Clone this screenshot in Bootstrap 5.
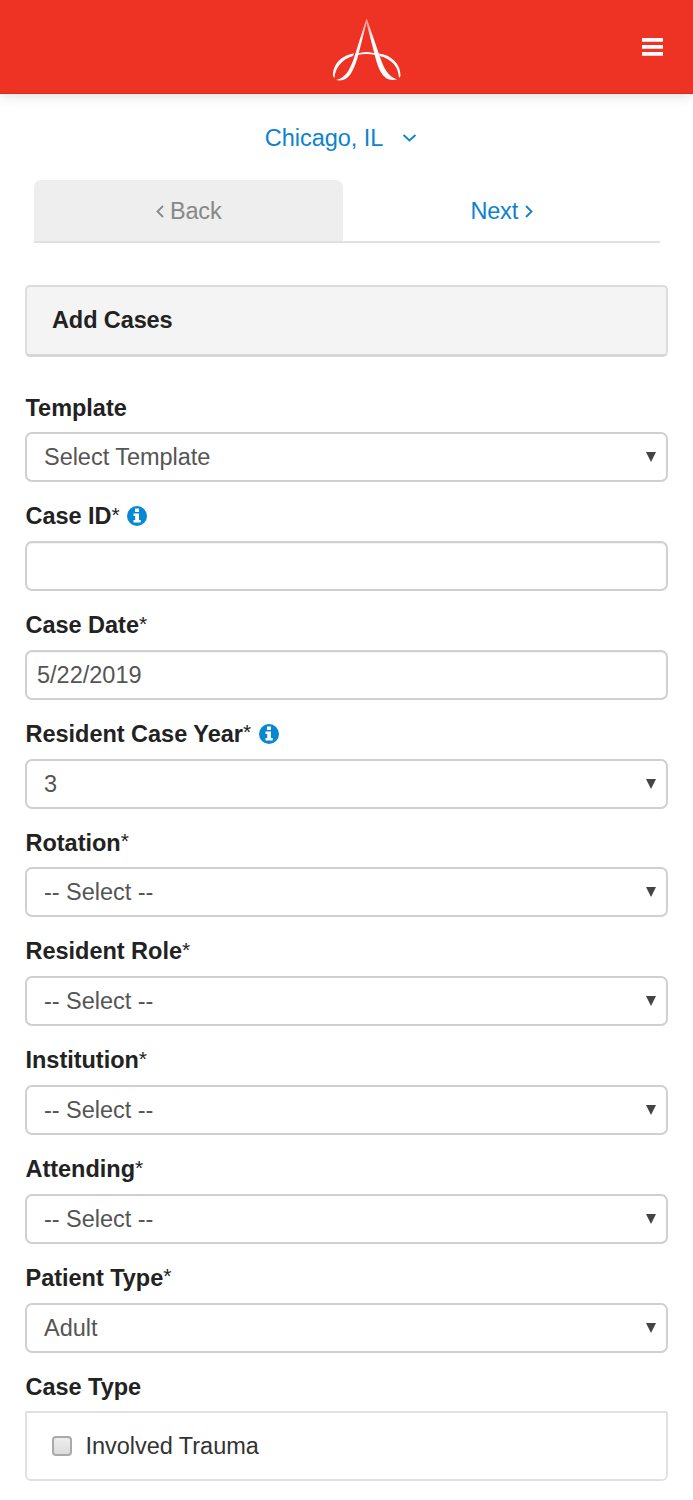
<!DOCTYPE html>
<html lang="en">
<head>
<meta charset="utf-8">
<meta name="viewport" content="width=device-width, initial-scale=1">
<title>Add Cases</title>
<link href="https://cdn.jsdelivr.net/npm/bootstrap@5.3.0/dist/css/bootstrap.min.css" rel="stylesheet">
<style>
body{font-family:"Liberation Sans",Arial,sans-serif;font-size:23.5px;line-height:36px;color:#222;background:#fff;letter-spacing:-.1px}
.topbar{height:94px;background:#ee3324;border-bottom:1px solid #d92c20;box-shadow:0 2px 12px rgba(0,0,0,.13);padding:6px 30px 0}
.topbar .menu-icon{margin-bottom:6px}
.logo{margin-left:61px}
.accent,.accent:hover{color:#0d83cd}
.place{margin-top:26px;padding-right:11px;letter-spacing:-.05px}
.steps{margin:23.5px 33.5px 0;height:63.5px;border-bottom:2px solid #e0e0e0;letter-spacing:-.2px}
.steps .nav-link{padding:2px 0 0}
.steps .step-next{padding-left:2px}
.step-back{width:309.5px;background:#eee;color:#888;border-radius:7px 7px 0 0}
.panel-title{margin:42px 25px 0;height:71.5px;background:#f4f4f4;border:2px solid #ddd;border-bottom:3px solid #d6d6d6;border-radius:5px;padding:0 0 1px 25px;font-weight:700;letter-spacing:-.1px}
.fields{margin:17px 25px 0}
.field-label{display:flex;align-items:center;height:58.8px;padding:16px 0 6.8px .5px;font-weight:700;letter-spacing:-.02px;margin:0}
.req{font-weight:400;font-size:21px;letter-spacing:0;padding-bottom:3px}
.field-label svg{margin:0 0 0 7.5px}
.fields .form-select,.fields .form-control{height:50px;border:2px solid #d0d0d0;border-radius:7px;font-size:23.5px;line-height:36px;color:#555;letter-spacing:-.03px}
.fields .form-select{padding:5px 40px 5px 17px;background-image:url("data:image/svg+xml,%3Csvg xmlns='http://www.w3.org/2000/svg' viewBox='0 0 10 10'%3E%3Cpath d='M0 0h10L5 10z' fill='%23444'/%3E%3C/svg%3E");background-size:10px 10px;background-position:right 10.5px top 18px}
.fields .form-control{padding:6px 10px 4px;letter-spacing:0;box-shadow:inset 0 1px 1px rgba(0,0,0,.06)}
.check-panel{height:70px;margin-top:-.4px;border:2px solid #e1e1e1;border-radius:2px 2px 6px 6px;padding-left:25px;color:#333;letter-spacing:-.03px}
.check-panel .form-check-input{width:20px;height:20px;margin:0 13.5px 0 0;border:2px solid #aaa;border-radius:4px;background:linear-gradient(#eee,#dcdcdc)}
</style>
</head>
<body>
<svg class="d-none" xmlns="http://www.w3.org/2000/svg">
<symbol id="info" viewBox="0 0 20 20"><circle cx="10" cy="10" r="10" fill="#0788d1"/><path fill="#fff" d="M8 2.600h4v3.400H8zM6.500 7.500h5.500v6.600h1.700v2.500H6.500v-2.500h1.700V9.900H6.500z"/></symbol>
</svg>
<header class="topbar d-flex align-items-center justify-content-between">
<span></span>
<svg class="logo" width="70" height="64" viewBox="0 0 70 64">
<defs><linearGradient id="fade" gradientUnits="userSpaceOnUse" x1="0" y1="0" x2="0" y2="22"><stop offset="0" stop-color="#fff" stop-opacity=".4"/><stop offset="1" stop-color="#fff"/></linearGradient></defs>
<path fill="url(#fade)" d="M34.200 1 35 1 48 39C52 51 56 58 65 61.500 52 64.500 47 53 43.500 40L34.500 5 25.500 40C21 54 16 65 4 62 14 60 18 51 22 40z"/>
<g fill="#fff">
<path d="M22 35.500C10 37 .5 46 1 58L2.500 60C3 50 10 41 21 38zM47 35.500C60 37 69 47 68.500 58L67 60C66.500 49 60 41 47.600 38z"/>
<path d="M25.500 35.500Q34.500 32.500 43.500 35.500L44 37Q34.500 35 25 37z"/>
</g></svg>
<svg class="menu-icon" width="21" height="18" viewBox="0 0 21 18" role="button" aria-label="Menu"><path fill="#fff" d="M0 0h21v3.800H0zM0 7h21v3.800H0zM0 14h21v3.800H0z"/></svg>
</header>
<main>
<div class="place accent d-flex justify-content-center align-items-center">Chicago, IL
<svg class="ms-3" width="18" height="12" viewBox="0 0 18 12" fill="none" stroke="currentColor" stroke-width="1.8"><path d="m4.500 3 6 5.500 6-5.500"/></svg></div>
<nav class="steps nav flex-nowrap">
<a class="nav-link step-back d-flex align-items-center justify-content-center" href="#"><svg width="15" height="14" viewBox="0 0 15 14" fill="none" stroke="currentColor" stroke-width="1.8"><path d="M8 2 2.500 7.500 8 13"/></svg>Back</a>
<a class="nav-link step-next accent flex-fill d-flex align-items-center justify-content-center" href="#">Next<svg width="16" height="14" viewBox="0 0 16 14" fill="none" stroke="currentColor" stroke-width="1.8"><path d="M8 2 13.500 7.500 8 13"/></svg></a>
</nav>
<div class="panel-title d-flex align-items-center">Add Cases</div>
<form class="fields">
<label class="field-label" for="tpl">Template</label>
<select id="tpl" class="form-select"><option>Select Template</option></select>
<label class="field-label" for="cid">Case ID<span class="req">*</span><svg width="20" height="20"><use href="#info"/></svg></label>
<input id="cid" class="form-control" type="text">
<label class="field-label" for="cdate">Case Date<span class="req">*</span></label>
<input id="cdate" class="form-control" type="text" value="5/22/2019">
<label class="field-label" for="yr">Resident Case Year<span class="req">*</span><svg width="20" height="20"><use href="#info"/></svg></label>
<select id="yr" class="form-select"><option>3</option></select>
<label class="field-label" for="rot">Rotation<span class="req">*</span></label>
<select id="rot" class="form-select"><option>-- Select --</option></select>
<label class="field-label" for="role">Resident Role<span class="req">*</span></label>
<select id="role" class="form-select"><option>-- Select --</option></select>
<label class="field-label" for="inst">Institution<span class="req">*</span></label>
<select id="inst" class="form-select"><option>-- Select --</option></select>
<label class="field-label" for="att">Attending<span class="req">*</span></label>
<select id="att" class="form-select"><option>-- Select --</option></select>
<label class="field-label" for="pt">Patient Type<span class="req">*</span></label>
<select id="pt" class="form-select"><option>Adult</option></select>
<div class="field-label">Case Type</div>
<div class="check-panel d-flex align-items-center"><input class="form-check-input" type="checkbox" id="trauma"><label for="trauma">Involved Trauma</label></div>
</form>
</main>
<script src="https://cdn.jsdelivr.net/npm/bootstrap@5.3.0/dist/js/bootstrap.bundle.min.js"></script>
</body>
</html>
